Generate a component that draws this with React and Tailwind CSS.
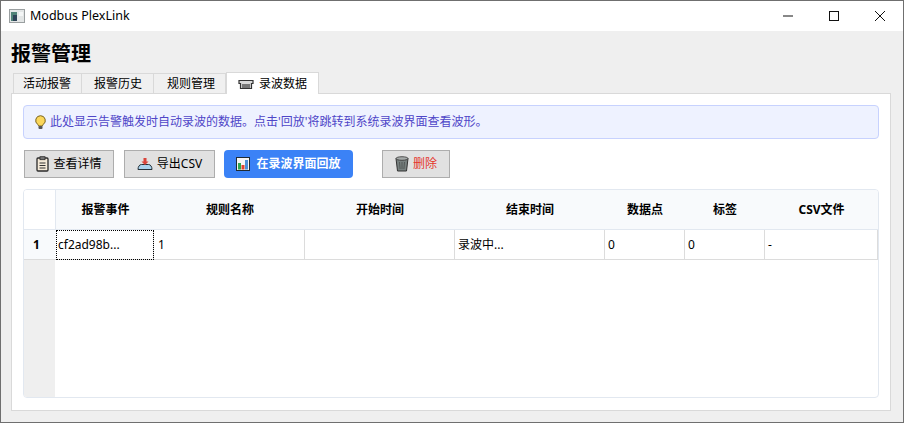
import React from 'react';

const font = { fontFamily: '"Noto Sans", "Noto Sans CJK SC", sans-serif' };

const columns = [
  { title: '报警事件', width: 'w-[99px]', cellWidth: 'w-[98px] pl-[2px] outline-1 -outline-offset-1 outline-black outline-dotted' },
  { title: '规则名称', width: 'w-[150px]', cellWidth: 'w-[151px] pl-[4px]' },
  { title: '开始时间', width: 'w-[150px]', cellWidth: 'w-[150px] pl-[3px]' },
  { title: '结束时间', width: 'w-[150px]', cellWidth: 'w-[150px] pl-[3px]' },
  { title: '数据点', width: 'w-[80px]', cellWidth: 'w-[80px] pl-[3px]' },
  { title: '标签', width: 'w-[80px]', cellWidth: 'w-[80px] pl-[3px]' },
  { title: 'CSV文件', width: 'flex-1', cellWidth: 'flex-1 pl-[3px]' },
];

const cells = ['cf2ad98b...', '1', '', '录波中...', '0', '0', '-'];
const tabs = [
  { label: '活动报警', cls: 'w-[69px] border-l pr-[1px]' },
  { label: '报警历史', cls: 'w-[72px] pl-[1px]' },
  { label: '规则管理', cls: 'w-[72px] pl-[3px]' },
];

const AppIcon = () => (
  <svg width="16" height="14" viewBox="0 0 16 14">
    <rect x="0.5" y="0.5" width="15" height="13" fill="#e3e6e6" stroke="#9a9fa0" />
    <rect x="2" y="3" width="6" height="9" fill="#4f8277" />
    <rect x="4" y="6" width="4" height="6" fill="#2d4257" />
    <rect x="10" y="3" width="4" height="4" fill="#f4f6f6" />
  </svg>
);

const TapeIcon = () => (
  <svg width="16" height="12" viewBox="0 0 16 12">
    <path d="M1 2.500h14v3h-1.500v5h-11v-5H1z" fill="#d9d9d9" stroke="#333" strokeWidth="1.2" />
    <rect x="4" y="6" width="8" height="4" fill="#777" />
  </svg>
);

const BulbIcon = () => (
  <svg width="11" height="15" viewBox="0 0 11 15">
    <path d="M5.500.7a4.800 4.800 0 0 0-2.800 8.700c.6.500.8 1 .8 1.600h4c0-.6.200-1.100.8-1.600A4.800 4.800 0 0 0 5.500.7z" fill="#fbd75b" stroke="#7a6420" strokeWidth="1" />
    <rect x="3.500" y="11" width="4" height="3" rx="1" fill="#555" />
  </svg>
);

const ClipboardIcon = () => (
  <svg width="13" height="16" viewBox="0 0 13 16">
    <rect x="1" y="2" width="11" height="13" rx="1" fill="#f5ead8" stroke="#2a2a2a" strokeWidth="1.3" />
    <rect x="4" y="0.7" width="5" height="3" fill="#777" stroke="#2a2a2a" strokeWidth="0.8" />
    <path d="M3.500 7h6M3.500 9.500h6M3.500 12h6" stroke="#333" strokeWidth="1" />
  </svg>
);

const ExportIcon = () => (
  <svg width="16" height="14" viewBox="0 0 16 14">
    <path d="M1 12.500c0-3 1.500-5 3.500-5h7c2 0 3.500 2 3.500 5z" fill="#a9d3ee" stroke="#26323a" strokeWidth="1" />
    <path d="M6.500 1h3v3.500h2L8 8 4.500 4.500h2z" fill="#d9453c" />
  </svg>
);

const ChartIcon = () => (
  <svg width="14" height="14" viewBox="0 0 14 14">
    <rect x="0.5" y="0.5" width="13" height="13" fill="#f5f5f5" stroke="#1f2a33" />
    <rect x="2" y="6" width="3" height="6.500" fill="#2fa84f" />
    <rect x="5.500" y="8" width="3" height="4.500" fill="#e0452f" />
    <rect x="9" y="3" width="3" height="9.500" fill="#4a90d9" />
  </svg>
);

const TrashIcon = () => (
  <svg width="14" height="16" viewBox="0 0 14 16">
    <path d="M1 2.500h12l-1.500 12.500h-9z" fill="#77807f" stroke="#333" strokeWidth="1" />
    <ellipse cx="7" cy="2.500" rx="6" ry="1.800" fill="#a5aaa9" stroke="#333" strokeWidth="0.8" />
    <path d="M4.500 6l.6 7M7 6v7M9.500 6l-.6 7" stroke="#4a4f4e" strokeWidth="0.8" />
  </svg>
);

const GrayButton = ({ icon, label, textClass = 'text-black', widthClass }) => (
  <button className={`flex h-[28px] items-center justify-center gap-[4px] border border-[#adadad] bg-[#e1e1e1] text-[12px] ${widthClass} ${textClass}`}>
    {icon}
    <span>{label}</span>
  </button>
);

export default function App() {
  return (
    <div className="flex h-[423px] w-[904px] flex-col overflow-hidden border border-[#6f6f6f] bg-[#efefef] text-black" style={font}>
      <div className="flex h-[30px] shrink-0 items-center bg-white pl-[8px]">
        <AppIcon />
        <span className="ml-[5px] text-[12.500px]">Modbus PlexLink</span>
        <div className="ml-auto flex h-full items-center">
          <svg width="46" height="30" viewBox="0 0 46 30"><path d="M18 15h10" stroke="#111" /></svg>
          <svg width="46" height="30" viewBox="0 0 46 30"><rect x="18.500" y="10.500" width="9" height="9" fill="none" stroke="#111" /></svg>
          <svg width="46" height="30" viewBox="0 0 46 30"><path d="M18 10l10 10M28 10l-10 10" stroke="#111" /></svg>
        </div>
      </div>

      <div className="flex flex-1 flex-col px-[10px]">
        <h1 className="mt-[9px] h-[28px] text-[20px] leading-[28px] font-bold">报警管理</h1>
        <div className="relative mt-[5px] flex h-[20px] items-end pl-[2px]">
          {tabs.map((tab) => (
            <div key={tab.label} className={`flex h-[20px] items-center justify-center border-t border-r border-[#d9d9d9] bg-[#f0f0f0] text-[12px] ${tab.cls}`}>
              {tab.label}
            </div>
          ))}
          <div className="z-10 -mb-px flex h-[22px] w-[93px] items-center justify-center gap-[5px] border border-b-0 border-[#d9d9d9] bg-white text-[12px]">
            <TapeIcon />
            <span>录波数据</span>
          </div>
        </div>

        <div className="flex h-[318px] w-[880px] flex-col border border-[#d9d9d9] bg-white pt-[11px] pl-[11px]">
          <div className="flex h-[34px] w-[856px] items-center gap-[4px] rounded border border-[#c7d2fe] bg-[#eef2ff] pl-[11px] text-[12px] text-[#4f46c8]">
            <BulbIcon />
            <span>此处显示告警触发时自动录波的数据。点击'回放'将跳转到系统录波界面查看波形。</span>
          </div>

          <div className="mt-[11px] ml-px flex items-center">
            <GrayButton icon={<ClipboardIcon />} label="查看详情" widthClass="w-[90px]" />
            <GrayButton icon={<ExportIcon />} label="导出CSV" widthClass="ml-[10px] w-[91px]" />
            <button className="ml-[9px] flex h-[28px] w-[129px] items-center justify-center gap-[6px] rounded-[4px] bg-[#3b82f6] text-[12px] font-bold text-white">
              <ChartIcon />
              <span>在录波界面回放</span>
            </button>
            <GrayButton icon={<TrashIcon />} label="删除" textClass="text-[#e5352b]" widthClass="ml-[29px] w-[68px]" />
          </div>

          <div className="mt-[11px] flex h-[209px] w-[856px] flex-col overflow-hidden rounded border border-[#e2e8f0]">
            <div className="flex h-[40px] shrink-0 border-b border-[#e2e8f0] text-[12px] font-bold">
              <div className="w-[31px] shrink-0 bg-white" />
              <div className="flex flex-1 border-l border-[#e2e8f0] bg-[#f8fafc]">
                {columns.map((col) => (
                  <div key={col.title} className={`flex items-center justify-center ${col.width}`}>
                    {col.title}
                  </div>
                ))}
              </div>
            </div>
            <div className="flex h-[30px] shrink-0">
              <div className="flex w-[32px] shrink-0 items-center border-b border-[#dcdcdc] bg-[#f8fafc] pl-[9px] text-[12px] font-bold">1</div>
              {cells.map((cell, i) => (
                <div key={i} className={`flex items-center border-r border-b border-[#dcdcdc] text-[12px] ${columns[i].cellWidth}`}>
                  {cell}
                </div>
              ))}
            </div>
            <div className="flex-1">
              <div className="h-full w-[31px] bg-[#efefef]" />
            </div>
          </div>
        </div>
      </div>
    </div>
  );
}
